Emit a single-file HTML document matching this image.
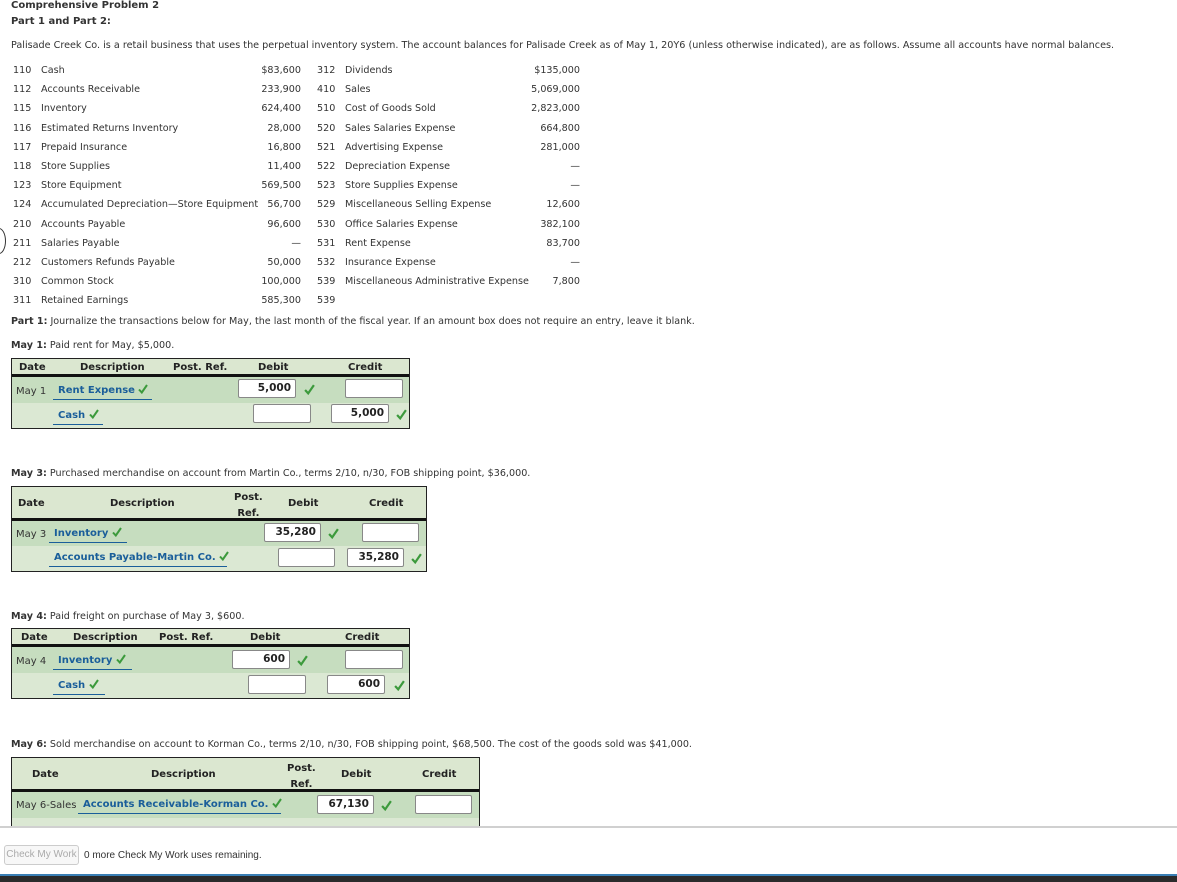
<!DOCTYPE html>
<html><head><meta charset="utf-8"><style>
*{margin:0;padding:0;box-sizing:border-box}
body{width:1177px;height:882px;position:relative;overflow:hidden;background:#fff;font-family:"DejaVu Sans","Liberation Sans",sans-serif;font-size:10px;color:#333}
.a{position:absolute;white-space:nowrap;line-height:12px}
.r{text-align:right}
b{font-weight:bold}
.t{position:absolute;border:1px solid #222;background:#dbe8d3}
.h{position:absolute;left:0;right:0;top:0;background:#dbe7d0;border-bottom:3px solid #111}
.r1{position:absolute;left:0;right:0;background:#c6ddbf}
.hd{position:absolute;font-weight:bold;color:#222;line-height:12px;text-align:center}
.lk{position:absolute;color:#1a5e9a;font-weight:bold;border-bottom:1px solid #1a5e9a;padding:0 4px 2px 5px;line-height:12px;white-space:nowrap}
.ck{display:inline-block;width:10px;height:10px;vertical-align:-1px}
.in{position:absolute;background:#fff;border:1px solid #888;border-radius:2px;height:19px;text-align:right;padding-right:4px;line-height:17px;font-weight:bold;color:#222;font-size:10.5px}
.g{position:absolute;width:11px;height:11px}
</style></head><body>
<svg width="0" height="0" style="position:absolute"><defs><symbol id="c" viewBox="0 0 10 10"><path d="M1 5.5 L3.8 8.5 L9 1" fill="none" stroke="#3c9a3c" stroke-width="2"/></symbol></defs></svg>
<div class="a" style="left:11px;top:0;font-weight:bold">Comprehensive Problem 2</div>
<div class="a" style="left:11px;top:16px;font-weight:bold">Part 1 and Part 2:</div>
<div class="a" style="left:11px;top:40px;font-size:9.65px">Palisade Creek Co. is a retail business that uses the perpetual inventory system. The account balances for Palisade Creek as of May 1, 20Y6 (unless otherwise indicated), are as follows. Assume all accounts have normal balances.</div>
<div style="position:absolute;left:-8px;top:228px;width:14px;height:26px;border:1px solid #333;border-radius:50%"></div>

<div class="a" style="left:13px;top:61px;line-height:19.2px;font-size:9.6px">110<br>112<br>115<br>116<br>117<br>118<br>123<br>124<br>210<br>211<br>212<br>310<br>311</div>
<div class="a" style="left:41px;top:61px;line-height:19.2px;font-size:9.6px">Cash<br>Accounts Receivable<br>Inventory<br>Estimated Returns Inventory<br>Prepaid Insurance<br>Store Supplies<br>Store Equipment<br>Accumulated Depreciation—Store Equipment<br>Accounts Payable<br>Salaries Payable<br>Customers Refunds Payable<br>Common Stock<br>Retained Earnings</div>
<div class="a r" style="left:220px;width:81px;top:61px;line-height:19.2px;font-size:9.6px">$83,600<br>233,900<br>624,400<br>28,000<br>16,800<br>11,400<br>569,500<br>56,700<br>96,600<br>—<br>50,000<br>100,000<br>585,300</div>
<div class="a" style="left:317px;top:61px;line-height:19.2px;font-size:9.6px">312<br>410<br>510<br>520<br>521<br>522<br>523<br>529<br>530<br>531<br>532<br>539<br>539</div>
<div class="a" style="left:345px;top:61px;line-height:19.2px;font-size:9.6px">Dividends<br>Sales<br>Cost of Goods Sold<br>Sales Salaries Expense<br>Advertising Expense<br>Depreciation Expense<br>Store Supplies Expense<br>Miscellaneous Selling Expense<br>Office Salaries Expense<br>Rent Expense<br>Insurance Expense<br>Miscellaneous Administrative Expense</div>
<div class="a r" style="left:480px;width:100px;top:61px;line-height:19.2px;font-size:9.6px">$135,000<br>5,069,000<br>2,823,000<br>664,800<br>281,000<br>—<br>—<br>12,600<br>382,100<br>83,700<br>—<br>7,800</div>

<div class="a" style="left:11px;top:316px;font-size:9.6px"><b>Part 1:</b> Journalize the transactions below for May, the last month of the fiscal year. If an amount box does not require an entry, leave it blank.</div>
<div class="a" style="left:11px;top:340px;font-size:9.6px"><b>May 1:</b> Paid rent for May, $5,000.</div>

<!-- T1 -->
<div class="t" style="left:11px;top:358px;width:399px;height:71px">
<div class="h" style="height:18px"></div>
<div class="hd" style="left:7px;top:3px">Date</div><div class="hd" style="left:68px;top:3px">Description</div><div class="hd" style="left:161px;top:3px">Post. Ref.</div><div class="hd" style="left:246px;top:3px">Debit</div><div class="hd" style="left:336px;top:3px">Credit</div>
<div class="r1" style="top:18px;height:26px"></div>
<div class="a" style="left:4px;top:27px">May 1</div>
<div class="lk" style="left:41px;top:25px;width:99px">Rent Expense <svg class="ck"><use href="#c"/></svg></div>
<div class="in" style="left:226px;top:20px;width:58px">5,000</div><svg class="g" style="left:292px;top:25px"><use href="#c"/></svg>
<div class="in" style="left:333px;top:20px;width:58px"></div>
<div class="lk" style="left:41px;top:50px;width:50px">Cash <svg class="ck"><use href="#c"/></svg></div>
<div class="in" style="left:241px;top:45px;width:58px"></div>
<div class="in" style="left:319px;top:45px;width:58px">5,000</div><svg class="g" style="left:384px;top:50px"><use href="#c"/></svg>
</div>

<div class="a" style="left:11px;top:468px;font-size:9.6px"><b>May 3:</b> Purchased merchandise on account from Martin Co., terms 2/10, n/30, FOB shipping point, $36,000.</div>
<div class="t" style="left:11px;top:486px;width:416px;height:86px">
<div class="h" style="height:34px"></div>
<div class="hd" style="left:6px;top:11px">Date</div><div class="hd" style="left:98px;top:11px">Description</div><div class="hd" style="left:222px;top:3px;line-height:16px">Post.<br>Ref.</div><div class="hd" style="left:276px;top:11px">Debit</div><div class="hd" style="left:357px;top:11px">Credit</div>
<div class="r1" style="top:34px;height:25px"></div>
<div class="a" style="left:4px;top:42px">May 3</div>
<div class="lk" style="left:37px;top:40px;width:78px">Inventory <svg class="ck"><use href="#c"/></svg></div>
<div class="in" style="left:252px;top:36px;width:57px">35,280</div><svg class="g" style="left:316px;top:41px"><use href="#c"/></svg>
<div class="in" style="left:350px;top:36px;width:57px"></div>
<div class="lk" style="left:37px;top:64px;width:178px">Accounts Payable-Martin Co. <svg class="ck"><use href="#c"/></svg></div>
<div class="in" style="left:266px;top:61px;width:57px"></div>
<div class="in" style="left:335px;top:61px;width:57px">35,280</div><svg class="g" style="left:399px;top:66px"><use href="#c"/></svg>
</div>

<div class="a" style="left:11px;top:611px;font-size:9.6px"><b>May 4:</b> Paid freight on purchase of May 3, $600.</div>
<div class="t" style="left:11px;top:628px;width:399px;height:71px">
<div class="h" style="height:18px"></div>
<div class="hd" style="left:9px;top:3px">Date</div><div class="hd" style="left:61px;top:3px">Description</div><div class="hd" style="left:147px;top:3px">Post. Ref.</div><div class="hd" style="left:238px;top:3px">Debit</div><div class="hd" style="left:333px;top:3px">Credit</div>
<div class="r1" style="top:18px;height:26px"></div>
<div class="a" style="left:4px;top:27px">May 4</div>
<div class="lk" style="left:41px;top:25px;width:79px">Inventory <svg class="ck"><use href="#c"/></svg></div>
<div class="in" style="left:220px;top:21px;width:58px">600</div><svg class="g" style="left:285px;top:26px"><use href="#c"/></svg>
<div class="in" style="left:333px;top:21px;width:58px"></div>
<div class="lk" style="left:41px;top:50px;width:52px">Cash <svg class="ck"><use href="#c"/></svg></div>
<div class="in" style="left:236px;top:46px;width:58px"></div>
<div class="in" style="left:315px;top:46px;width:58px">600</div><svg class="g" style="left:382px;top:51px"><use href="#c"/></svg>
</div>

<div class="a" style="left:11px;top:739px;font-size:9.6px"><b>May 6:</b> Sold merchandise on account to Korman Co., terms 2/10, n/30, FOB shipping point, $68,500. The cost of the goods sold was $41,000.</div>
<div class="t" style="left:11px;top:757px;width:469px;height:90px">
<div class="h" style="height:34px"></div>
<div class="hd" style="left:20px;top:11px">Date</div><div class="hd" style="left:139px;top:11px">Description</div><div class="hd" style="left:275px;top:3px;line-height:16px">Post.<br>Ref.</div><div class="hd" style="left:329px;top:11px">Debit</div><div class="hd" style="left:410px;top:11px">Credit</div>
<div class="r1" style="top:34px;height:26px"></div>
<div class="a" style="left:4px;top:42px">May 6-Sales</div>
<div class="lk" style="left:66px;top:40px;width:203px">Accounts Receivable-Korman Co. <svg class="ck"><use href="#c"/></svg></div>
<div class="in" style="left:305px;top:37px;width:57px">67,130</div><svg class="g" style="left:369px;top:42px"><use href="#c"/></svg>
<div class="in" style="left:403px;top:37px;width:57px"></div>
</div>

<div style="position:absolute;left:0;top:826px;width:1177px;height:56px;background:#fff;border-top:2px solid #d0d0d0"></div>
<div style="position:absolute;left:4px;top:845px;width:75px;height:20px;border:1px solid #ccc;border-radius:3px;background:#f7f7f7;color:#aaa;font-family:'Liberation Sans',sans-serif;font-size:10px;line-height:18px;text-align:center">Check My Work</div>
<div class="a" style="left:84px;top:850px;font-family:'Liberation Sans',sans-serif;font-size:10px;color:#333">0 more Check My Work uses remaining.</div>
<div style="position:absolute;left:0;top:874px;width:1177px;height:8px;background:#2b2b2b;border-top:2px solid #3a7fb5"></div>
</body></html>
